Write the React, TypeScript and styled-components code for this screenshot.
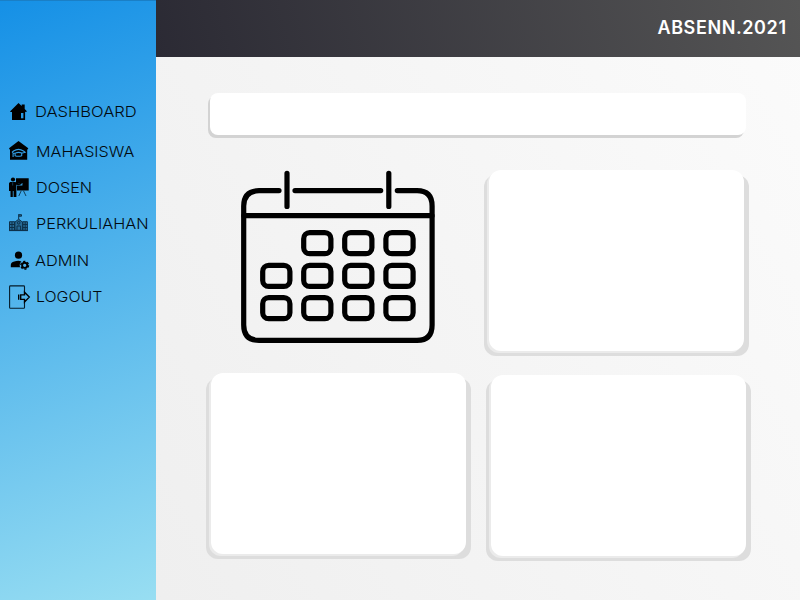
import React from "react";
import styled, { createGlobalStyle } from "styled-components";

const GlobalStyle = createGlobalStyle`
  * { box-sizing: border-box; }
  body { margin: 0; font-family: Inter, "Liberation Sans", sans-serif; }
`;

const Page = styled.div`
  display: grid;
  grid-template-columns: 156px 644px;
  width: 800px;
  height: 600px;
  overflow: hidden;
  background: linear-gradient(60deg, #ededed, #fbfbfb);
`;

const Sidebar = styled.aside`
  padding-top: 93px;
  background: linear-gradient(160deg, #1590e6 0%, #98def2 100%);
  border-top: 1px solid #1a7fc6;
`;

const Menu = styled.nav`
  display: flex;
  flex-direction: column;
`;

const MenuItem = styled.a<{ $height: number; $indent: number }>`
  display: grid;
  grid-template-columns: ${(p) => p.$indent - 8}px 1fr;
  align-items: center;
  height: ${(p) => p.$height}px;
  padding-left: 8px;
  color: #020a10;
`;

const MenuLabel = styled.span<{ $stretch: number }>`
  justify-self: start;
  font-size: 15px;
  font-weight: 300;
  line-height: 20px;
  white-space: nowrap;
  transform: scaleX(${(p) => p.$stretch});
  transform-origin: left center;
`;

const Icon = styled.svg`
  display: block;
  width: 24px;
  height: 24px;
  overflow: visible;
`;

const Main = styled.main`
  display: flex;
  flex-direction: column;
`;

const Header = styled.header`
  display: flex;
  justify-content: flex-end;
  height: 57px;
  padding: 16px 14px 0 0;
  background: linear-gradient(75deg, #2b2a34, #555555);
`;

const Brand = styled.div`
  color: #fff;
  font-size: 18px;
  font-weight: 600;
  line-height: 24px;
  letter-spacing: 0.6px;
  margin-right: -0.6px;
`;

const Content = styled.section`
  padding: 36px 54px 0;
`;

const SearchBar = styled.div`
  width: 536px;
  height: 42px;
  border-radius: 8px;
  background: #fff;
  box-shadow: -2px 3px 0 #d3d3d3;
`;

const Board = styled.div`
  display: grid;
  grid-template-columns: 255px 255px;
  grid-template-rows: 181px 181px;
  column-gap: 24px;
  row-gap: 22px;
  margin: 35px 0 0 1px;
`;

const Card = styled.div<{ $left?: number; $top?: number }>`
  margin: ${(p) => p.$top ?? 0}px 0 ${(p) => -(p.$top ?? 0)}px ${(p) => p.$left ?? 0}px;
  width: 254.5px;
  border-radius: 12px;
  background: #fff;
  box-shadow: -2px 2px 0 #ebebeb, -5px 5px 0 #dddddd, 5px 5px 0 #dddddd;
`;

const CalendarArt = styled.svg`
  display: block;
  width: 200px;
  height: 176px;
  margin-left: 26px;
`;

const House = () => (
  <Icon viewBox="0 0 24 24">
    <path d="M2 11.5 10.5 3l3.2 3.1V4.4h3v4.7l2.2 2.2-.8.8-1-.3v8.1H4v-8l-1.3.2z" fill="#000" />
    <path d="M13 13h2.4v5.3H13z" fill="#2698e3" />
  </Icon>
);

const Campus = () => (
  <Icon viewBox="0 0 24 24">
    <path d="M1 8.2 10.5 1l9.8 7.2-.7 1.4h-.4v10.2H2V9.6h-.4z" fill="#000" />
    <path d="M4 12.5 5.5 11q5-3.2 10 0l1.6 1.3-3.4.9v2.5q-3.4 1.2-6.6 0v-2.5l-2 .1v3.7M7.5 13q3.2-1.2 6.2 0" fill="none" stroke="#329ee5" strokeWidth="1.1" />
  </Icon>
);

const Teacher = () => (
  <Icon viewBox="0 0 24 24">
    <path d="M8 2.2h12.7v12.2H9V9.5h5.4V7H8z" fill="#000" />
    <circle cx="5" cy="3.5" r="2.1" fill="#000" />
    <path d="M2 6h5.2l3.6 1.2 2.7-.5.3 1.2-3 1.4-2.4-.6V21H5.6v-6h-.8v6H2.5v-6H1V7.2z" fill="#000" />
    <path d="M4.7 6.3v3.2M13.3 14.6 10.8 20M15.4 14.6l2.6 5.4" stroke="#123e59" strokeWidth="1" />
  </Icon>
);

const School = () => (
  <Icon viewBox="0 0 24 24" fill="none" stroke="#0d3049" strokeWidth="1">
    <path d="M10.7 7V2.2M10.7 2.7h2.8v1.5h-2.8M6.7 10.3l4-3.1 4 3.1v8H6.7zM1.5 9.7h5.2v8.6H1.5zM14.7 9.7h4.7v8.6h-4.7z" fill="#276a95" />
    <path d="M1 18.6h19M2 12.5h4.5M2 15.5h4.5M15 12.5h4.5M15 15.5h4.5M4 10v8M17.2 10v8M9 18v-4h3.6v4" />
    <circle cx="10.7" cy="10.8" r="1.3" />
  </Icon>
);

const UserGear = () => (
  <Icon viewBox="0 0 24 24">
    <circle cx="10.5" cy="6.2" r="3.6" fill="#000" />
    <path d="M2.8 18.2v-2.3q0-2.4 3.5-3.4 4-1.2 7.1-.1-2.4 2.2-1.4 5.8z" fill="#000" />
    <circle cx="16.7" cy="16.3" r="2.6" fill="none" stroke="#000" strokeWidth="1.9" />
    <circle cx="16.7" cy="16.3" r="3.9" fill="none" stroke="#000" strokeWidth="1.3" strokeDasharray="2.2 1.884" />
  </Icon>
);

const Exit = () => (
  <Icon viewBox="0 0 24 24" fill="none" stroke="#061c2a">
    <path d="M16.5 8.2V1.7q0-.8-.8-.8H2.4q-.8 0-.8.8v20.8q0 .8.8.8h13.3q.8 0 .8-.8v-6.2" strokeWidth="1.1" />
    <path d="M12.7 9.8h3.8V7.2l4.8 4.9-4.8 4.9v-2.6h-3.8zM10.7 9.5v5.3" stroke="#000" strokeWidth="1.35" />
  </Icon>
);

const menu = [
  { label: "DASHBOARD", icon: <House />, height: 35, indent: 35, stretch: 1.105 },
  { label: "MAHASISWA", icon: <Campus />, height: 45, indent: 35.5, stretch: 1.075 },
  { label: "DOSEN", icon: <Teacher />, height: 28, indent: 35.5, stretch: 1.08 },
  { label: "PERKULIAHAN", icon: <School />, height: 44, indent: 35.5, stretch: 1.085 },
  { label: "ADMIN", icon: <UserGear />, height: 30, indent: 34.5, stretch: 1.09 },
  { label: "LOGOUT", icon: <Exit />, height: 42, indent: 35.5, stretch: 1.06 },
];

const cells = [230, 262.7, 295].flatMap((y, row) =>
  [260, 301, 342, 383.2].filter((_, col) => row > 0 || col > 0).map((x) => ({ x, y }))
);

const Calendar = () => (
  <CalendarArt viewBox="237 170 200 176" fill="none" stroke="#000" strokeWidth="5.2" strokeLinecap="round">
    <path d="M279 190.6H259Q243.7 191 243.7 206V325Q243.7 340.4 259 340.4H417Q432.1 340.4 432.1 325V206Q432.1 190.6 417 190.6H397.3" />
    <path d="M295 190.6H380.7M287 173.3V206.5M388.8 173.3V206.5M244 215.7H432" />
    {cells.map(({ x, y }) => (
      <rect key={`${x}-${y}`} x={x + 2.7} y={y + 2.7} width="27.2" height="21" rx="6" />
    ))}
  </CalendarArt>
);

export default function App() {
  return (
    <Page>
      <GlobalStyle />
      <Sidebar>
        <Menu>
          {menu.map((item) => (
            <MenuItem key={item.label} $height={item.height} $indent={item.indent}>
              {item.icon}
              <MenuLabel $stretch={item.stretch}>{item.label}</MenuLabel>
            </MenuItem>
          ))}
        </Menu>
      </Sidebar>
      <Main>
        <Header>
          <Brand>ABSENN.2021</Brand>
        </Header>
        <Content>
          <SearchBar />
          <Board>
            <Calendar />
            <Card $left={-1} />
            <Card />
            <Card $left={1} $top={2} />
          </Board>
        </Content>
      </Main>
    </Page>
  );
}
